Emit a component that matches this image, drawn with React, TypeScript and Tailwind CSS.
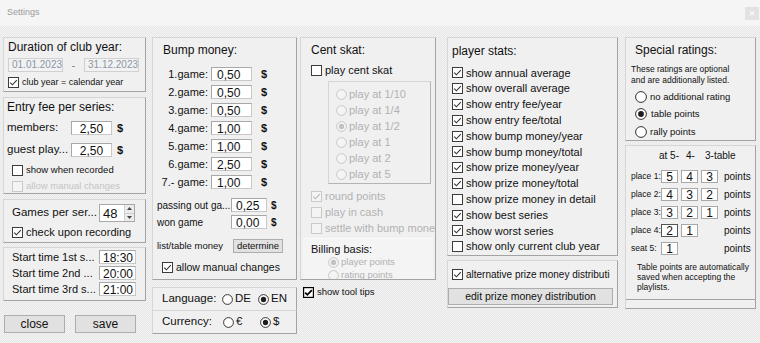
import React from "react";

const PANEL =
  "bg-[#f0f0f0] border border-t-[#d6d6d6] border-l-[#d6d6d6] border-r-[#a3a3a3] border-b-[#a3a3a3]";

function Check({
  checked = false,
  disabled = false,
  classic = false,
}: {
  checked?: boolean;
  disabled?: boolean;
  classic?: boolean;
}) {
  const stroke = disabled ? "#cacaca" : classic ? "#000" : "#3c3c3c";
  const fill = disabled ? "#f4f4f4" : "#ffffff";
  return (
    <svg width="11" height="11" viewBox="0 0 11 11" className="shrink-0">
      <rect x="0.5" y="0.5" width="10" height="10" fill={fill} stroke={stroke} strokeWidth={classic ? 1.4 : 1} />
      {checked && (
        <path
          d="M2.2 5.6 L4.4 7.8 L8.8 3.2"
          fill="none"
          stroke={disabled ? "#b8b8b8" : classic ? "#000" : "#333"}
          strokeWidth={classic ? 1.8 : 1.1}
        />
      )}
    </svg>
  );
}

function Radio({
  checked = false,
  disabled = false,
  size = 11,
}: {
  checked?: boolean;
  disabled?: boolean;
  size?: number;
}) {
  const c = disabled ? "#c6c6c6" : "#333";
  const r = size / 2;
  return (
    <svg width={size} height={size} viewBox={`0 0 ${size} ${size}`} className="shrink-0">
      <circle cx={r} cy={r} r={r - 0.6} fill={disabled ? "#f4f4f4" : "#fff"} stroke={c} strokeWidth="1" />
      {checked && <circle cx={r} cy={r} r={size * 0.24} fill={disabled ? "#c2c2c2" : "#1e1e1e"} />}
    </svg>
  );
}

function DateBox({ children }: { children: React.ReactNode }) {
  return (
    <div className="w-[55px] h-[14px] bg-[#f2f2f2] border border-[#d0d0d0] flex items-center pl-[3px] text-[10px] text-[#8896a8] leading-none">
      {children}
    </div>
  );
}

function Field({ children, className }: { children: React.ReactNode; className: string }) {
  return (
    <div
      className={`${className} bg-white border border-[#a8a8a8] border-b-[#c8c8c8] border-r-[#c8c8c8] flex items-center text-[12px] leading-none pt-[2px]`}
    >
      {children}
    </div>
  );
}

function Btn({ children, className }: { children: React.ReactNode; className: string }) {
  return (
    <div className={`${className} bg-[#e1e1e1] border border-[#adadad] flex items-center justify-center`}>
      {children}
    </div>
  );
}

function Spinner() {
  return (
    <div className="w-[36px] h-[18px] bg-white border border-[#a8a8a8] flex">
      <div className="flex-1 text-[13px] leading-none pl-[3px] pt-[2px]">48</div>
      <div className="w-[10px] flex flex-col border-l border-[#d0d0d0]">
        <div className="flex-1 bg-[#ececec] border-b border-[#d0d0d0] flex items-center justify-center">
          <svg width="5" height="3" viewBox="0 0 5 3">
            <path d="M0 3 L2.5 0 L5 3 Z" fill="#444" />
          </svg>
        </div>
        <div className="flex-1 bg-[#ececec] flex items-center justify-center">
          <svg width="5" height="3" viewBox="0 0 5 3">
            <path d="M0 0 L2.5 3 L5 0 Z" fill="#444" />
          </svg>
        </div>
      </div>
    </div>
  );
}

function PointBox({ v, focus = false }: { v: string; focus?: boolean }) {
  return (
    <div
      className={`w-[17px] h-[13px] bg-white border ${
        focus ? "border-[#555]" : "border-[#a8a8a8]"
      } flex items-center justify-center text-[12px] leading-none pt-[1px]`}
    >
      {v}
    </div>
  );
}

const bump: [string, string][] = [
  ["1.game:", "0,50"],
  ["2.game:", "0,50"],
  ["3.game:", "0,50"],
  ["4.game:", "1,00"],
  ["5.game:", "1,00"],
  ["6.game:", "2,50"],
  ["7.- game:", "1,00"],
];

const cent = ["play at 1/10", "play at 1/4", "play at 1/2", "play at 1", "play at 2", "play at 5"];

const stats: [string, boolean][] = [
  ["show annual average", true],
  ["show overall average", true],
  ["show entry fee/year", true],
  ["show entry fee/total", true],
  ["show bump money/year", true],
  ["show bump money/total", true],
  ["show prize money/year", true],
  ["show prize money/total", true],
  ["show prize money in detail", false],
  ["show best series", true],
  ["show worst series", true],
  ["show only current club year", false],
];

const places: [string, string[]][] = [
  ["place 1:", ["5", "4", "3"]],
  ["place 2:", ["4", "3", "2"]],
  ["place 3:", ["3", "2", "1"]],
  ["place 4:", ["2", "1"]],
  ["seat 5:", ["1"]],
];

export default function App() {
  return (
    <div className="w-[760px] h-[343px] overflow-hidden bg-[#efefef] font-['Liberation_Sans',Arial,sans-serif] text-[#111] flex flex-col">
      {/* title bar */}
      <div className="h-[26px] bg-[#f5f5f5] flex items-start justify-between shrink-0">
        <span className="text-[9px] leading-[10px] text-[#9a9a9a] ml-[7px] mt-[7px]">Settings</span>
        <div className="w-[14px] h-[13px] mt-[7px] mr-[1px] bg-[#e2e2e2] flex items-center justify-center text-white text-[11px] leading-none">
          ×
        </div>
      </div>

      {/* body */}
      <div className="flex-1 flex items-start pl-[3px] pt-[11px] bg-[image:repeating-conic-gradient(#e7e7e7_0_25%,#f3f3f3_0_50%)] bg-[length:2px_2px]">
        {/* column 1 */}
        <div className="w-[143px] flex flex-col">
          <div className={`${PANEL} h-[55px] px-[4px]`}>
            <div className="text-[12px] leading-[14px] pt-[2px]">Duration of club year:</div>
            <div className="flex items-center mt-[4px] h-[14px]">
              <DateBox>01.01.2023</DateBox>
              <div className="w-[21px] text-center text-[10px] text-[#777]">-</div>
              <DateBox>31.12.2023</DateBox>
            </div>
            <div className="flex items-center mt-[5px] h-[11px] gap-[3px]">
              <Check checked />
              <span className="text-[9px] leading-[11px]">club year = calendar year</span>
            </div>
          </div>

          <div className={`${PANEL} mt-[5px] h-[97px] pl-[3px]`}>
            <div className="text-[12px] leading-[14px] pt-[2px]">Entry fee per series:</div>
            <div className="flex items-center mt-[7px] h-[14px]">
              <span className="w-[64px] text-[11.5px]">members:</span>
              <Field className="w-[41px] h-[14px] justify-center">2,50</Field>
              <span className="ml-[5px] text-[11px] font-bold">$</span>
            </div>
            <div className="flex items-center mt-[8px] h-[14px]">
              <span className="w-[64px] text-[11.5px]">guest play...</span>
              <Field className="w-[41px] h-[14px] justify-center">2,50</Field>
              <span className="ml-[5px] text-[11px] font-bold">$</span>
            </div>
            <div className="flex items-center mt-[8px] h-[11px] pl-[5px] gap-[3px]">
              <Check />
              <span className="text-[9.5px]">show when recorded</span>
            </div>
            <div className="flex items-center mt-[5px] h-[11px] pl-[5px] gap-[3px]">
              <Check disabled />
              <span className="text-[9.5px] text-[#c4c4c4]">allow manual changes</span>
            </div>
          </div>

          <div className={`${PANEL} mt-[5px] h-[44px] pl-[8px]`}>
            <div className="flex items-center mt-[4px] h-[18px]">
              <span className="w-[87px] text-[11.5px]">Games per ser...</span>
              <Spinner />
            </div>
            <div className="flex items-center mt-[5px] h-[11px] gap-[3px]">
              <Check checked />
              <span className="text-[11px]">check upon recording</span>
            </div>
          </div>

          <div className={`${PANEL} mt-[4px] h-[54px] pl-[8px] pt-[2px] flex flex-col gap-[2px]`}>
            {[
              ["Start time 1st s...", "18:30"],
              ["Start time 2nd ...", "20:00"],
              ["Start time 3rd s...", "21:00"],
            ].map(([l, v]) => (
              <div key={l} className="flex items-center h-[14px]">
                <span className="w-[87px] text-[11px] whitespace-nowrap">{l}</span>
                <Field className="w-[37px] h-[14px] pl-[3px]">{v}</Field>
              </div>
            ))}
          </div>

          <div className="flex mt-[14px]">
            <Btn className="ml-[1px] w-[61px] h-[18px] text-[12px]">close</Btn>
            <Btn className="ml-[10px] w-[61px] h-[18px] text-[12px]">save</Btn>
          </div>
        </div>

        {/* column 2 */}
        <div className="ml-[6px] w-[145px] flex flex-col">
          <div className={`${PANEL} h-[243px]`}>
            <div className="pl-[10px] pt-[5px] text-[12px] leading-[14px]">Bump money:</div>
            <div className="mt-[10px] flex flex-col gap-[4px]">
              {bump.map(([l, v]) => (
                <div key={l} className="flex items-center h-[14px]">
                  <span className="w-[55px] text-right text-[11px] whitespace-nowrap">{l}</span>
                  <Field className="ml-[3px] w-[41px] h-[14px] pl-[5px]">{v}</Field>
                  <span className="ml-[9px] text-[11px] font-bold">$</span>
                </div>
              ))}
            </div>
            <div className="mt-[9px] flex items-center h-[14px]">
              <span className="w-[78px] pl-[4px] text-[10px] whitespace-nowrap">passing out ga...</span>
              <Field className="w-[36px] h-[14px] pl-[4px]">0,25</Field>
              <span className="ml-[4px] text-[10px] font-bold">$</span>
            </div>
            <div className="mt-[3px] flex items-center h-[14px]">
              <span className="w-[78px] pl-[4px] text-[10px] whitespace-nowrap">won game</span>
              <Field className="w-[36px] h-[14px] pl-[4px]">0,00</Field>
              <span className="ml-[4px] text-[10px] font-bold">$</span>
            </div>
            <div className="mt-[10px] flex items-center h-[14px]">
              <span className="w-[80px] pl-[4px] text-[9.5px] whitespace-nowrap">list/table money</span>
              <Btn className="w-[50px] h-[14px] text-[9.5px]">determine</Btn>
            </div>
            <div className="mt-[9px] pl-[9px] flex items-center h-[11px] gap-[3px]">
              <Check checked />
              <span className="text-[10.5px]">allow manual changes</span>
            </div>
          </div>

          <div className={`${PANEL} mt-[7px] h-[24px] pl-[9px] flex items-center`}>
            <span className="w-[60px] text-[11.5px]">Language:</span>
            <div className="w-[36px] flex items-center gap-[2px]">
              <Radio />
              <span className="text-[11.5px]">DE</span>
            </div>
            <div className="flex items-center gap-[2px]">
              <Radio checked />
              <span className="text-[11.5px]">EN</span>
            </div>
          </div>
          <div className={`${PANEL} mt-[-1px] h-[24px] pl-[9px] flex items-center`}>
            <span className="w-[61px] text-[11.5px]">Currency:</span>
            <div className="w-[37px] flex items-center gap-[2px]">
              <Radio />
              <span className="text-[11.5px]">€</span>
            </div>
            <div className="flex items-center gap-[2px]">
              <Radio checked />
              <span className="text-[11.5px]">$</span>
            </div>
          </div>
        </div>

        {/* column 3 */}
        <div className="ml-[3px] w-[136px] flex flex-col">
          <div className={`${PANEL} h-[243px] flex flex-col overflow-hidden`}>
            <div className="pl-[10px] pt-[5px] text-[12px] leading-[14px]">Cent skat:</div>
            <div className="pl-[10px] mt-[8px] flex items-center h-[11px] gap-[3px]">
              <Check />
              <span className="text-[11px]">play cent skat</span>
            </div>
            <div className="ml-[27px] mt-[5px] w-[103px] h-[103px] shrink-0 border border-t-[#d4d4d4] border-l-[#d4d4d4] border-r-[#b4b4b4] border-b-[#b4b4b4] pl-[7px] pt-[4px]">
              {cent.map((c) => (
                <div key={c} className="h-[16px] flex items-center gap-[2px]">
                  <Radio disabled checked={c === "play at 1/2"} />
                  <span className="text-[11px] text-[#b2b2b2]">{c}</span>
                </div>
              ))}
            </div>
            <div className="pl-[10px] mt-[4px]">
              <div className="h-[16px] flex items-center gap-[3px]">
                <Check disabled checked />
                <span className="text-[11px] text-[#b2b2b2] whitespace-nowrap">round points</span>
              </div>
              <div className="h-[16px] flex items-center gap-[3px]">
                <Check disabled />
                <span className="text-[11px] text-[#b2b2b2] whitespace-nowrap">play in cash</span>
              </div>
              <div className="h-[16px] flex items-center gap-[3px]">
                <Check disabled />
                <span className="text-[11px] text-[#b2b2b2] whitespace-nowrap">settle with bump money</span>
              </div>
            </div>
            <div className="mx-[2px] mt-[2px] flex-1 bg-[#f4f4f4] border-t border-t-[#fbfbfb] pl-[8px]">
              <div className="pt-[3px] text-[11px] leading-[14px]">Billing basis:</div>
              <div className="pl-[17px] h-[13px] flex items-center gap-[2px]">
                <Radio disabled checked />
                <span className="text-[9.5px] text-[#b2b2b2]">player points</span>
              </div>
              <div className="pl-[17px] h-[13px] flex items-center gap-[2px]">
                <Radio disabled />
                <span className="text-[9.5px] text-[#b2b2b2]">rating points</span>
              </div>
            </div>
          </div>
          <div className="mt-[7px] pl-[3px] flex items-center gap-[3px] h-[11px]">
            <Check checked classic />
            <span className="text-[9.5px]">show tool tips</span>
          </div>
        </div>

        {/* column 4 */}
        <div className="ml-[11px] w-[171px] flex flex-col">
          <div className={`${PANEL} h-[219px] pl-[4px]`}>
            <div className="pt-[6px] text-[12px] leading-[14px]">player stats:</div>
            <div className="mt-[7px]">
              {stats.map(([t, c]) => (
                <div key={t} className="h-[15.8px] flex items-center gap-[3px]">
                  <Check checked={c} />
                  <span className="text-[11px] whitespace-nowrap">{t}</span>
                </div>
              ))}
            </div>
          </div>
          <div className={`${PANEL} mt-[4px] h-[48px] pt-[8px]`}>
            <div className="pl-[4px] flex items-center h-[11px] gap-[3px]">
              <Check checked />
              <span className="w-[144px] overflow-hidden whitespace-nowrap text-[10px]">
                alternative prize money distribution
              </span>
            </div>
            <Btn className="mt-[8px] w-[165px] h-[17px] text-[10.5px]">edit prize money distribution</Btn>
          </div>
        </div>

        {/* column 5 */}
        <div className="ml-[7px] w-[131px] flex flex-col">
          <div className={`${PANEL} h-[104px]`}>
            <div className="pl-[9px] pt-[5px] text-[12px] leading-[14px]">Special ratings:</div>
            <div className="pl-[5px] mt-[7px] text-[8.5px] leading-[11px] whitespace-nowrap">
              These ratings are optional
              <br />
              and are additionally listed.
            </div>
            <div className="pl-[9px] mt-[2px]">
              <div className="h-[17.5px] flex items-center gap-[3px]">
                <Radio size={12} />
                <span className="text-[9.5px]">no additional rating</span>
              </div>
              <div className="h-[17.5px] flex items-center gap-[4px]">
                <Radio size={12} checked />
                <span className="text-[9.5px]">table points</span>
              </div>
              <div className="h-[17.5px] flex items-center gap-[3px]">
                <Radio size={12} />
                <span className="text-[9.5px]">rally points</span>
              </div>
            </div>
          </div>
          <div className={`${PANEL} mt-[4px] h-[164px]`}>
            <div className="h-[154px] border-b border-b-[#a3a3a3]">
              <div className="pt-[4px] flex text-[10px] leading-[12px]">
                <span className="ml-[33px] w-[27px]">at 5-</span>
                <span className="w-[19px]">4-</span>
                <span>3-table</span>
              </div>
              <div className="mt-[7px] flex flex-col gap-[4px]">
                {places.map(([l, vals]) => (
                  <div key={l} className="h-[14px] flex items-center pl-[5px]">
                    <span className="w-[30px] text-[8.5px] whitespace-nowrap">{l}</span>
                    <div className="flex gap-[3px]">
                      {[0, 1, 2].map((i) =>
                        vals[i] ? (
                          <PointBox key={i} v={vals[i]} focus={l === "place 4:" && i === 0} />
                        ) : (
                          <div key={i} className="w-[17px] h-[13px]" />
                        )
                      )}
                    </div>
                    <span className="ml-[6px] text-[10px]">points</span>
                  </div>
                ))}
              </div>
              <div className="mt-[7px] pl-[11px] text-[8.5px] leading-[10px] whitespace-nowrap">
                Table points are automatically
                <br />
                saved when accepting the
                <br />
                playlists.
              </div>
            </div>
          </div>
        </div>
      </div>
    </div>
  );
}
